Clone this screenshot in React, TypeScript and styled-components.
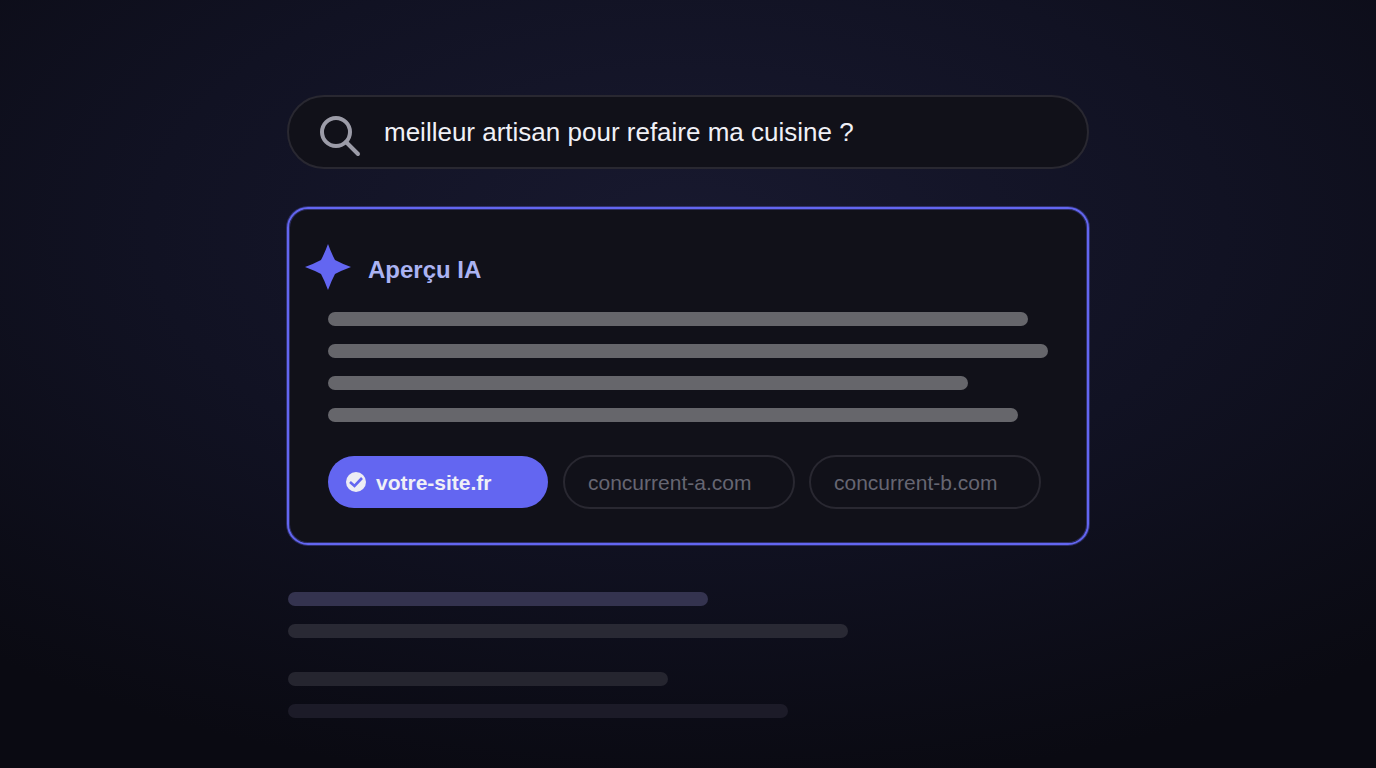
import React from "react";
import styled, { createGlobalStyle } from "styled-components";

const GlobalStyle = createGlobalStyle`
  *, *::before, *::after { box-sizing: border-box; }
  body {
    margin: 0;
    background: #0a0a12;
    font-family: "Liberation Sans", Arial, Helvetica, sans-serif;
  }
`;

const Page = styled.main`
  min-height: 100vh;
  padding: 95px 24px 50px;
  display: flex;
  justify-content: center;
  background: radial-gradient(ellipse 78% 73% at 50% 30%, #18192f 0%, #111223 50%, #0a0a12 100%);
`;

const Column = styled.div`
  width: 100%;
  max-width: 802px;
`;

const SearchBar = styled.form`
  height: 74px;
  padding: 0 30px;
  display: flex;
  align-items: center;
  gap: 21px;
  border: 2px solid #292831;
  border-radius: 37px;
  background: #111119;
`;

const SearchIcon = styled.svg`
  flex: none;
  width: 44px;
  height: 44px;
  margin-top: 6px;
`;

const SearchInput = styled.input`
  flex: 1;
  min-width: 0;
  height: 40px;
  padding: 0;
  border: 0;
  outline: 0;
  background: transparent;
  color: #f0f0f6;
  font-family: inherit;
  font-size: 26px;
`;

const Overview = styled.section`
  margin-top: 38px;
  padding: 34px 39px;
  border: 2px solid #6366f1;
  border-radius: 21px;
  background: #111119;
  box-shadow: 0 0 0 1px rgba(99, 102, 241, 0.35), inset 0 0 0 1px rgba(99, 102, 241, 0.35);
`;

const OverviewHeader = styled.header`
  display: flex;
  align-items: center;
  gap: 16px;
  height: 48px;
  margin-left: -24px;
`;

const Star = styled.svg`
  flex: none;
  width: 48px;
  height: 48px;
`;

const Title = styled.h1`
  margin: 6px 0 0;
  color: #abb3f2;
  font-size: 24px;
  line-height: 28px;
  font-weight: 700;
`;

const Lines = styled.div`
  display: flex;
  flex-direction: column;
  gap: 18px;
`;

const AnswerLines = styled(Lines)`
  margin-top: 21px;
`;

const Line = styled.div<{ $width: number; $color: string }>`
  width: ${(p) => p.$width}px;
  max-width: 100%;
  height: 14px;
  border-radius: 7px;
  background: ${(p) => p.$color};
`;

const Sources = styled.nav`
  display: flex;
  align-items: center;
  gap: 14px;
  margin: 33px -1px 0;
`;

const Source = styled.a`
  display: flex;
  align-items: center;
  width: 232px;
  height: 54px;
  padding: 2px 23px 0;
  border: 2px solid #292831;
  border-radius: 27px;
  color: #666672;
  font-size: 21px;
  line-height: 24px;
  text-decoration: none;
`;

const CitedSource = styled(Source)`
  gap: 8px;
  width: 220px;
  height: 52px;
  margin: 0 1px;
  padding: 0 16px;
  border: 0;
  background: #6366f1;
  color: #f0f0f6;
  font-weight: 700;
`;

const SourceName = styled.span`
  padding-top: 2px;
`;

const Results = styled.div`
  display: flex;
  flex-direction: column;
  gap: 34px;
  margin-top: 47px;
  padding-left: 1px;
`;

const answer = [700, 720, 640, 690];

const results = [
  [
    { width: 420, color: "#34334f" },
    { width: 560, color: "#292934" },
  ],
  [
    { width: 380, color: "#25252f" },
    { width: 500, color: "#1c1b28" },
  ],
];

export default function App() {
  return (
    <>
      <GlobalStyle />
      <Page>
        <Column>
          <SearchBar role="search" onSubmit={(e) => e.preventDefault()}>
            <SearchIcon viewBox="0 0 44 44" fill="none" stroke="#9c9ca8" strokeWidth="4" strokeLinecap="round" aria-hidden="true">
              <circle cx="17" cy="19" r="14" />
              <path d="M27 29 L39 41" />
            </SearchIcon>
            <SearchInput type="text" aria-label="Recherche" defaultValue="meilleur artisan pour refaire ma cuisine ?" />
          </SearchBar>

          <Overview>
            <OverviewHeader>
              <Star viewBox="-24 -24 48 48" fill="#6366f1" aria-hidden="true">
                <path d="M0 -23 Q3.5 -13.5 7 -7 Q13.5 -3.5 23 0 Q13.5 3.5 7 7 Q3.5 13.5 0 23 Q-3.5 13.5 -7 7 Q-13.5 3.5 -23 0 Q-13.5 -3.5 -7 -7 Q-3.5 -13.5 0 -23 Z" />
              </Star>
              <Title>Aperçu IA</Title>
            </OverviewHeader>
            <AnswerLines>
              {answer.map((width) => (
                <Line key={width} $width={width} $color="#66666b" />
              ))}
            </AnswerLines>
            <Sources aria-label="Sources">
              <CitedSource href="#votre-site">
                <svg width="24" height="24" viewBox="0 0 24 24" fill="none" aria-hidden="true">
                  <circle cx="12" cy="12" r="10" fill="#ededf4" />
                  <path d="M6 12 L10.5 16 L18 8" stroke="#6366f1" strokeWidth="2.6" />
                </svg>
                <SourceName>votre-site.fr</SourceName>
              </CitedSource>
              <Source href="#concurrent-a">concurrent-a.com</Source>
              <Source href="#concurrent-b">concurrent-b.com</Source>
            </Sources>
          </Overview>

          <Results>
            {results.map((group, i) => (
              <Lines key={i}>
                {group.map((line) => (
                  <Line key={line.width} $width={line.width} $color={line.color} />
                ))}
              </Lines>
            ))}
          </Results>
        </Column>
      </Page>
    </>
  );
}
